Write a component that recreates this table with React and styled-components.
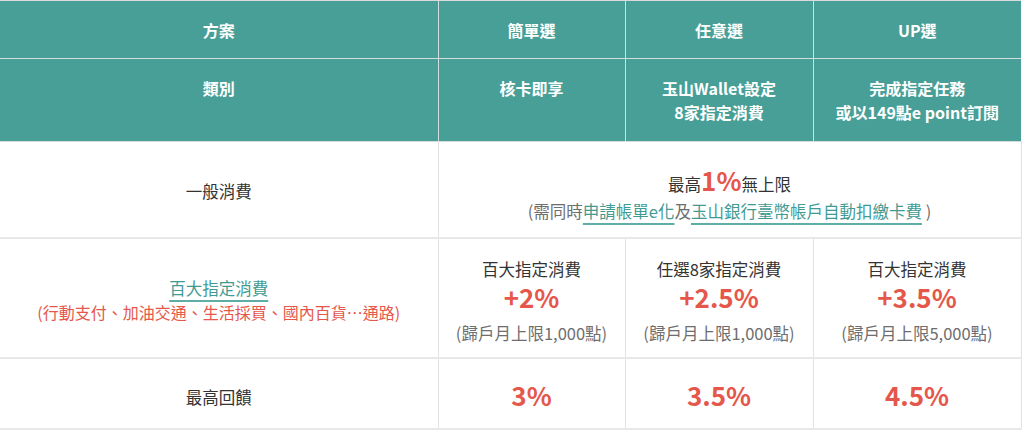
import React from 'react';
import styled, { createGlobalStyle } from 'styled-components';

const GlobalStyle = createGlobalStyle`
  body {
    margin: 0;
    background: #fff;
    font-family: "Noto Sans CJK TC", "Noto Sans", sans-serif;
  }
`;

const Table = styled.table`
  width: 1021px;
  border-collapse: collapse;
  table-layout: fixed;
  border-top: 1px solid #d9d9d9;
  color: #333;
  font-size: 16.5px;
`;

const HeadRow = styled.tr`
  height: ${p => p.h}px;
  background: #489f98;
`;

const HeadCell = styled.th`
  color: #fff;
  font-weight: 700;
  font-size: 16px;
  line-height: 24px;
  text-align: center;
  vertical-align: top;
  padding: 17px 0 0;
  border-left: 1px solid #d3dddc;
  border-bottom: 1px solid #d3dddc;
  &:first-child { border-left: none; }
`;

const BodyRow = styled.tr`
  height: ${p => p.h}px;
  border-bottom: 2px solid #e8e8e8;
`;

const Cell = styled.td`
  text-align: center;
  vertical-align: ${p => (p.top ? 'top' : 'middle')};
  padding: ${p => p.pad || '0'};
  border-left: 1px solid #e2e2e2;
  border-right: 1px solid #e2e2e2;
  line-height: 24px;
  &:first-child { border-left: none; }
`;

const Line = styled.div`
  height: ${p => p.lh || 24}px;
  line-height: ${p => p.lh || 24}px;
  color: ${p => p.color || '#333'};
`;

const Big = styled.span`
  color: #e5574b;
  font-weight: 700;
  font-size: ${p => p.size || 26}px;
  line-height: 1;
`;

const Gray = styled.span`
  color: #6e6e6e;
`;

const Link = styled.span`
  color: #3f9b94;
  text-decoration: underline;
  text-decoration-color: #5eaea7;
  text-decoration-thickness: 2px;
  text-underline-offset: 5px;
`;

const Red = styled.div`
  color: #e5574b;
  font-size: 16px;
  line-height: 24px;
`;

const plans = [
  { name: '百大指定消費', rate: '+2%', limit: '(歸戶月上限1,000點)', max: '3%' },
  { name: '任選8家指定消費', rate: '+2.5%', limit: '(歸戶月上限1,000點)', max: '3.5%' },
  { name: '百大指定消費', rate: '+3.5%', limit: '(歸戶月上限5,000點)', max: '4.5%' },
];

export default function App() {
  return (
    <>
      <GlobalStyle />
      <Table>
        <colgroup>
          <col style={{ width: 438 }} />
          <col style={{ width: 187 }} />
          <col style={{ width: 188 }} />
          <col style={{ width: 208 }} />
        </colgroup>
        <thead>
          <HeadRow h={58}>
            <HeadCell>方案</HeadCell>
            <HeadCell>簡單選</HeadCell>
            <HeadCell>任意選</HeadCell>
            <HeadCell>UP選</HeadCell>
          </HeadRow>
          <HeadRow h={83}>
            <HeadCell>類別</HeadCell>
            <HeadCell>核卡即享</HeadCell>
            <HeadCell>玉山Wallet設定<br />8家指定消費</HeadCell>
            <HeadCell>完成指定任務<br />或以149點e point訂閱</HeadCell>
          </HeadRow>
        </thead>
        <tbody>
          <BodyRow h={96}>
            <Cell pad="4px 0 0">一般消費</Cell>
            <Cell colSpan={3} pad="12px 0 0">
              <Line lh={32}>最高<Big>1%</Big>無上限</Line>
              <Line>
                <Gray>(需同時</Gray><Link>申請帳單e化</Link><Gray>及</Gray>
                <Link>玉山銀行臺幣帳戶自動扣繳卡費</Link><Gray> )</Gray>
              </Line>
            </Cell>
          </BodyRow>
          <BodyRow h={120}>
            <Cell pad="4px 0 0">
              <Line><Link>百大指定消費</Link></Line>
              <Red>(行動支付、加油交通、生活採買、國內百貨…通路)</Red>
            </Cell>
            {plans.map((p, i) => (
              <Cell key={i} top pad="18px 0 0">
                <Line>{p.name}</Line>
                <Line lh={40}><Big>{p.rate}</Big></Line>
                <Line><Gray>{p.limit}</Gray></Line>
              </Cell>
            ))}
          </BodyRow>
          <BodyRow h={71}>
            <Cell pad="7px 0 0">最高回饋</Cell>
            {plans.map((p, i) => (
              <Cell key={i} pad="7px 0 0"><Big>{p.max}</Big></Cell>
            ))}
          </BodyRow>
        </tbody>
      </Table>
    </>
  );
}
